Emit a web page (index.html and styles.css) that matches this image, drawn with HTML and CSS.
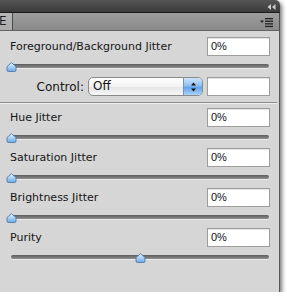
FILE: index.html
```html
<!DOCTYPE html>
<html>
<head>
<meta charset="utf-8">
<link rel="stylesheet" href="styles.css">
</head>
<body>
<div class="panel">
  <div class="titlebar">
    <svg class="collapse" width="9" height="6" viewBox="0 0 9 6"><path d="M4 0 L0.5 3 L4 6 Z M8.5 0 L5 3 L8.5 6 Z" fill="#cfcfcf"/></svg>
  </div>
  <div class="tabbar">
    <div class="tab">E</div>
    <svg class="menu" width="14" height="10" viewBox="0 0 14 10"><path d="M0 2.5 H4 L2 5 Z" fill="#222"/><rect x="5" y="0" width="8" height="1.3" fill="#222"/><rect x="5" y="2.6" width="8" height="1.3" fill="#222"/><rect x="5" y="5.2" width="8" height="1.3" fill="#222"/><rect x="5" y="7.8" width="8" height="1.3" fill="#222"/></svg>
  </div>
  <div class="content">
    <div class="group">
      <div class="field-row"><span class="label">Foreground/Background Jitter</span><div class="input">0%</div></div>
      <div class="slider"><div class="track"></div><svg class="thumb" style="left:0%" width="11" height="10" viewBox="0 0 11 10"><defs><linearGradient id="tg" x1="0" y1="0" x2="0" y2="1"><stop offset="0" stop-color="#e4f1fc"/><stop offset="0.5" stop-color="#a9d0f4"/><stop offset="1" stop-color="#6aa8e6"/></linearGradient></defs><path d="M1 4.6 L5.5 0.6 L10 4.6 L10 8 Q10 9.5 8.5 9.5 L2.5 9.5 Q1 9.5 1 8 Z" fill="url(#tg)" stroke="#4f79a8" stroke-width="0.9"/></svg></div>
    </div>
    <div class="control-row">
      <span class="control-label">Control:</span>
      <div class="popup"><span class="popup-text">Off</span><span class="arrows"><svg width="7" height="10" viewBox="0 0 7 10"><path d="M3.5 0.5 L6 3.5 H1 Z M3.5 9.5 L6 6.5 H1 Z" fill="#111"/></svg></span></div>
      <div class="input"></div>
    </div>
    <div class="sep"></div>
    <div class="group">
      <div class="field-row"><span class="label">Hue Jitter</span><div class="input">0%</div></div>
      <div class="slider"><div class="track"></div><svg class="thumb" style="left:0%" width="11" height="10" viewBox="0 0 11 10"><path d="M1 4.6 L5.5 0.6 L10 4.6 L10 8 Q10 9.5 8.5 9.5 L2.5 9.5 Q1 9.5 1 8 Z" fill="url(#tg)" stroke="#4f79a8" stroke-width="0.9"/></svg></div>
    </div>
    <div class="group">
      <div class="field-row"><span class="label">Saturation Jitter</span><div class="input">0%</div></div>
      <div class="slider"><div class="track"></div><svg class="thumb" style="left:0%" width="11" height="10" viewBox="0 0 11 10"><path d="M1 4.6 L5.5 0.6 L10 4.6 L10 8 Q10 9.5 8.5 9.5 L2.5 9.5 Q1 9.5 1 8 Z" fill="url(#tg)" stroke="#4f79a8" stroke-width="0.9"/></svg></div>
    </div>
    <div class="group">
      <div class="field-row"><span class="label">Brightness Jitter</span><div class="input">0%</div></div>
      <div class="slider"><div class="track"></div><svg class="thumb" style="left:0%" width="11" height="10" viewBox="0 0 11 10"><path d="M1 4.6 L5.5 0.6 L10 4.6 L10 8 Q10 9.5 8.5 9.5 L2.5 9.5 Q1 9.5 1 8 Z" fill="url(#tg)" stroke="#4f79a8" stroke-width="0.9"/></svg></div>
    </div>
    <div class="group">
      <div class="field-row"><span class="label">Purity</span><div class="input">0%</div></div>
      <div class="slider"><div class="track"></div><svg class="thumb" style="left:50%" width="11" height="10" viewBox="0 0 11 10"><path d="M1 4.6 L5.5 0.6 L10 4.6 L10 8 Q10 9.5 8.5 9.5 L2.5 9.5 Q1 9.5 1 8 Z" fill="url(#tg)" stroke="#4f79a8" stroke-width="0.9"/></svg></div>
    </div>
  </div>
</div>
</body>
</html>
```

FILE: styles.css
```css
html, body {
  margin: 0;
  padding: 0;
  background: #ffffff;
}
body {
  font-family: "DejaVu Sans", sans-serif;
  font-size: 11px;
  color: #151515;
}
.panel {
  width: 280px;
  height: 292px;
  display: flex;
  flex-direction: column;
  background: #d6d6d6;
  border-top-right-radius: 5px;
  overflow: hidden;
  box-shadow: 2px 2px 4px rgba(0, 0, 0, 0.55);
}
.titlebar {
  height: 12px;
  flex: none;
  background: linear-gradient(#555555, #3b3b3b);
  border-bottom: 1px solid #1c1c1c;
  display: flex;
  justify-content: flex-end;
  align-items: flex-start;
  padding-right: 4px;
}
.collapse {
  margin-top: 4px;
}
.tabbar {
  height: 17px;
  flex: none;
  background: linear-gradient(#9d9d9d, #8a8a8a);
  border-bottom: 1px solid #626262;
  border-right: 1px solid #4c4c4c;
  display: flex;
  justify-content: space-between;
  align-items: stretch;
}
.tab {
  width: 12px;
  background: linear-gradient(#b7b7b7, #ababab);
  border-right: 1px solid #4a4a4a;
  font-size: 12px;
  color: #1d1d1d;
  line-height: 17px;
  text-indent: -1px;
}
.menu {
  align-self: flex-start;
  margin-top: 5px;
  margin-right: 5px;
}
.content {
  flex: 1;
  padding: 6px 9px 0 10px;
  border-right: 1px solid #565656;
  display: flex;
  flex-direction: column;
}
.group {
  height: 40px;
  display: flex;
  flex-direction: column;
}
.field-row {
  height: 19px;
  display: flex;
  justify-content: space-between;
  align-items: center;
}
.label {
  line-height: 19px;
}
.input {
  width: 63px;
  height: 19px;
  box-sizing: border-box;
  border: 1px solid #9d9d9d;
  background: #ffffff;
  box-shadow: inset 0 1px 0 #e2e2e2;
  font-family: "Liberation Sans", sans-serif;
  font-size: 11px;
  line-height: 17px;
  padding-left: 3px;
  color: #111;
}
.slider {
  position: relative;
  height: 21px;
  margin-left: 1px;
  margin-right: 1px;
}
.track {
  position: absolute;
  left: 0;
  right: 0;
  top: 8px;
  height: 4px;
  border-radius: 2px;
  background: linear-gradient(#5c5c5c, #8f8f8f);
  box-shadow: 0 1px 0 #ececec;
}
.thumb {
  position: absolute;
  top: 6px;
  margin-left: -5px;
}
.control-row {
  height: 19px;
  display: flex;
  align-items: center;
  gap: 4px;
}
.control-label {
  width: 74px;
  text-align: right;
  font-size: 12px;
}
.popup {
  width: 115px;
  height: 19px;
  box-sizing: border-box;
  border: 1px solid #8a8a8a;
  border-radius: 5px;
  overflow: hidden;
  display: flex;
  background: linear-gradient(#ffffff, #f3f3f3 50%, #e6e6e6 55%, #f7f7f7);
}
.popup-text {
  flex: 1;
  padding-left: 4px;
  line-height: 17px;
  font-size: 12px;
}
.arrows {
  width: 18px;
  border-left: 1px solid #7193bd;
  background: linear-gradient(#cfe4fa, #8fc0f1 45%, #63a3ea 55%, #a9d3fa);
  display: flex;
  align-items: center;
  justify-content: center;
}
.sep {
  height: 1px;
  margin: 6px -7px 5px -10px;
  background: #8e8e8e;
  box-shadow: 0 1px 0 #efefef;
}
```
